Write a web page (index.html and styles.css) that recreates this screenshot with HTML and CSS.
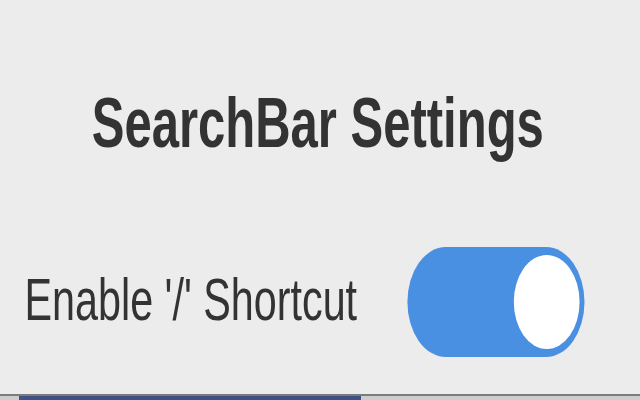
FILE: index.html
```html
<!DOCTYPE html>
<html>
<head>
<meta charset="utf-8">
<link rel="stylesheet" href="styles.css">
</head>
<body>
<div class="page">
  <div class="panel">
    <h1 class="title">SearchBar Settings</h1>
    <div class="row">
      <span class="label">Enable '/' Shortcut</span>
      <span class="switch"><span class="knob"></span></span>
    </div>
  </div>
  <div class="bottom"><div class="seg"></div></div>
</div>
</body>
</html>
```
FILE: styles.css
```css
html, body {
  margin: 0;
  padding: 0;
  background: #ececec;
  overflow: hidden;
}
.page {
  width: 640px;
  height: 400px;
  display: flex;
  flex-direction: column;
  overflow: hidden;
}
.panel {
  width: 914px;
  flex: none;
  transform: scaleX(0.7);
  transform-origin: left top;
  padding-top: 88px;
  font-family: "Liberation Sans", Arial, sans-serif;
  color: #333;
}
.title {
  margin: 0;
  padding-right: 6px;
  font-size: 70px;
  line-height: 1;
  font-weight: 700;
  text-align: center;
  color: #333;
}
.row {
  margin-top: 89px;
  padding-left: 35px;
  display: flex;
  align-items: center;
  gap: 72px;
}
.label {
  font-size: 59px;
  line-height: 1;
  color: #333;
  position: relative;
  top: -2px;
}
.switch {
  width: 253px;
  height: 110px;
  border-radius: 55px;
  background: #4a90e2;
  box-sizing: border-box;
  padding: 8px 7px;
  display: flex;
  justify-content: flex-end;
  align-items: center;
}
.knob {
  width: 94px;
  height: 94px;
  border-radius: 50%;
  background: #fff;
}
.bottom {
  margin-top: auto;
  height: 6px;
  box-sizing: border-box;
  border-top: 2px solid #7c7c7c;
  background: #cdcdcd;
}
.seg {
  margin-left: 19px;
  width: 342px;
  height: 4px;
  background: #3e5283;
}
```
